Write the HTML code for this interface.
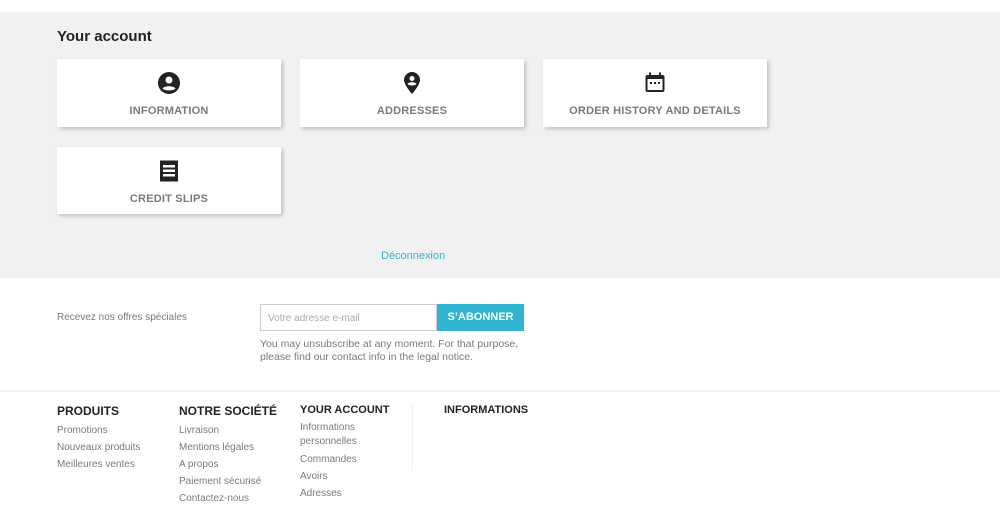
<!DOCTYPE html>
<html><head><meta charset="utf-8"><style>
*{margin:0;padding:0;box-sizing:border-box}
body{width:1000px;height:503px;overflow:hidden;background:#fff;font-family:"Liberation Sans",sans-serif;position:relative}
.top{position:absolute;left:0;top:0;width:1000px;height:12px;background:#fff;box-shadow:0 2px 3px rgba(0,0,0,.12)}
.gray{position:absolute;left:0;top:12px;width:1000px;height:266px;background:#f1f1f1}
h1{position:absolute;left:57px;top:28px;font-size:15px;font-weight:bold;color:#232323}
.card{position:absolute;width:224px;height:68px;background:#fff;box-shadow:2px 2px 4px rgba(0,0,0,.2);text-align:center}
.card svg{position:absolute;left:50%;top:12px;transform:translateX(-50%)}
.card span{position:absolute;left:0;right:0;top:46px;font-size:11px;font-weight:bold;color:#7a7a7a;letter-spacing:.2px}
.a{position:absolute;color:#2fb5d2;font-size:11px}
.t{position:absolute;font-size:10px;color:#7a7a7a}
.h{position:absolute;font-size:12px;font-weight:bold;color:#232323}
</style></head><body>
<div class="top"></div>
<div class="gray"></div>
<h1>Your account</h1>
<div class="card" style="left:57px;top:59px"><svg width="24" height="24" viewBox="0 0 24 24"><circle cx="12" cy="12" r="11" fill="#232323"/><circle cx="12" cy="9" r="3.5" fill="#fff"/><path d="M5.5 17.5c2-3 11-3 13 0c-2 2.5-11 2.5-13 0z" fill="#fff"/></svg><span>INFORMATION</span></div>
<div class="card" style="left:300px;top:59px"><svg width="24" height="24" viewBox="0 0 24 24"><path d="M12 1a8 8 0 0 0-8 8c0 5 8 14 8 14s8-9 8-14a8 8 0 0 0-8-8z" fill="#232323"/><circle cx="12" cy="7.5" r="2.5" fill="#fff"/><path d="M7.5 13c1.5-2.5 7.5-2.5 9 0c-1.5 2-7.5 2-9 0z" fill="#fff"/></svg><span>ADDRESSES</span></div>
<div class="card" style="left:543px;top:59px"><svg width="24" height="24" viewBox="0 0 24 24"><rect x="2.5" y="4" width="19" height="17" rx="2" fill="#232323"/><rect x="4.5" y="8" width="15" height="11" fill="#fff"/><rect x="6" y="1.5" width="2" height="4" fill="#232323"/><rect x="16" y="1.5" width="2" height="4" fill="#232323"/><rect x="7" y="11" width="2" height="2" fill="#232323"/><rect x="11" y="11" width="2" height="2" fill="#232323"/><rect x="15" y="11" width="2" height="2" fill="#232323"/></svg><span>ORDER HISTORY AND DETAILS</span></div>
<div class="card" style="left:57px;top:147px;height:67px"><svg width="24" height="24" viewBox="0 0 24 24"><rect x="3" y="1.5" width="18" height="21" fill="#232323"/><rect x="6" y="6" width="12" height="2.5" fill="#fff"/><rect x="6" y="10.5" width="12" height="2.5" fill="#fff"/><rect x="6" y="15" width="12" height="2.5" fill="#fff"/></svg><span>CREDIT SLIPS</span></div>
<div class="a" style="left:381px;top:250px">Déconnexion</div>
<div class="t" style="left:57px;top:312px;font-size:10px">Recevez nos offres spéciales</div>
<div style="position:absolute;left:260px;top:304px;width:177px;height:27px;border:1px solid #ccc;background:#fff"><span style="position:absolute;left:7px;top:8px;font-size:10px;color:#aaa">Votre adresse e-mail</span></div>
<div style="position:absolute;left:437px;top:304px;width:87px;height:27px;background:#2fb5d2;color:#fff;font-size:11px;font-weight:bold;text-align:center;line-height:27px">S’ABONNER</div>
<div style="position:absolute;left:260px;top:338px;font-size:10.5px;color:#7a7a7a;line-height:13px">You may unsubscribe at any moment. For that purpose,<br>please find our contact info in the legal notice.</div>
<div style="position:absolute;left:0;top:390px;width:1000px;height:2px;background:#f1f1f1"></div>
<div class="h" style="left:57px;top:404px">PRODUITS</div>
<div class="h" style="left:179px;top:404px">NOTRE SOCIÉTÉ</div>
<div class="h" style="left:300px;top:404px;font-size:11px">YOUR ACCOUNT</div>
<div class="h" style="left:444px;top:404px;font-size:11px">INFORMATIONS</div>
<div style="position:absolute;left:412px;top:405px;width:1px;height:66px;background:#eee"></div>
<div class="t" style="left:57px;top:422px;line-height:17px">Promotions<br>Nouveaux produits<br>Meilleures ventes</div>
<div class="t" style="left:179px;top:422px;line-height:17px">Livraison<br>Mentions légales<br>A propos<br>Paiement sécurisé<br>Contactez-nous</div>
<div class="t" style="left:300px;top:421px;line-height:13.5px">Informations<br>personnelles</div>
<div class="t" style="left:300px;top:451px;line-height:17px">Commandes<br>Avoirs<br>Adresses</div>
</body></html>
